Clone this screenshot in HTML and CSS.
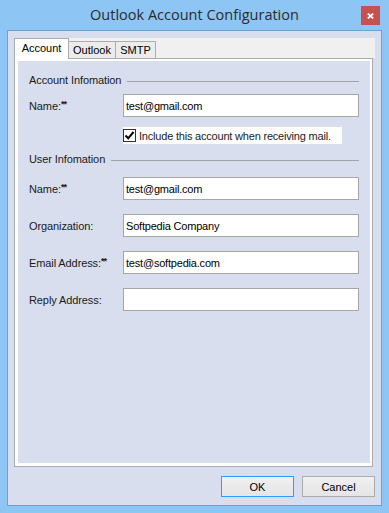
FILE: index.html
```html
<!DOCTYPE html>
<html>
<head>
<meta charset="utf-8">
<title>Outlook Account Configuration</title>
<link rel="stylesheet" href="styles.css">
</head>
<body>
<div class="window">
  <div class="titlebar">
    <span class="title">Outlook Account Configuration</span>
    <div class="close">
      <svg width="7" height="6" viewBox="0 0 7 6"><path d="M0.8 0.5 L6.2 5.5 M6.2 0.5 L0.8 5.5" stroke="#fff" stroke-width="1.8"/></svg>
    </div>
  </div>
  <div class="client">
    <div class="tabs">
      <div class="tabstrip">
        <div class="tab active t1">Account</div>
        <div class="tab t2">Outlook</div>
        <div class="tab t3">SMTP</div>
      </div>
      <div class="panel">
        <div class="page">
          <div class="group g1"><span>Account Infomation</span><span class="rule"></span></div>
          <div class="row r1">
            <label class="lbl">Name:<sup>**</sup></label>
            <input class="field" type="text" value="test@gmail.com" readonly>
          </div>
          <div class="check">
            <span class="box"><svg width="11" height="11" viewBox="0 0 11 11"><path d="M1.5 5.5 L4.2 8.3 L9.5 2" fill="none" stroke="#000" stroke-width="2"/></svg></span>
            <span>Include this account when receiving mail.</span>
          </div>
          <div class="group g2"><span>User Infomation</span><span class="rule"></span></div>
          <div class="rows">
            <div class="row">
              <label class="lbl">Name:<sup>**</sup></label>
              <input class="field" type="text" value="test@gmail.com" readonly>
            </div>
            <div class="row">
              <label class="lbl">Organization:</label>
              <input class="field" type="text" value="Softpedia Company" readonly>
            </div>
            <div class="row">
              <label class="lbl">Email Address:<sup>**</sup></label>
              <input class="field" type="text" value="test@softpedia.com" readonly>
            </div>
            <div class="row">
              <label class="lbl">Reply Address:</label>
              <input class="field" type="text" value="" readonly>
            </div>
          </div>
        </div>
      </div>
    </div>
    <div class="buttons">
      <button class="btn default">OK</button>
      <button class="btn">Cancel</button>
    </div>
  </div>
</div>
</body>
</html>
```
FILE: styles.css
```css
html, body {
  margin: 0;
  padding: 0;
  background: #8dc5f5;
  font-family: "Liberation Sans", Arial, sans-serif;
  font-size: 11px;
  color: #000;
}

.window {
  width: 389px;
  height: 513px;
  box-sizing: border-box;
  background: #8dc5f5;
  display: flex;
  flex-direction: column;
}

.titlebar {
  height: 30px;
  flex: none;
  display: grid;
  grid-template-columns: 1fr auto 1fr;
  align-items: start;
}

.title {
  grid-column: 2;
  font-family: "Open Sans", "Noto Sans", sans-serif;
  font-size: 14.5px;
  line-height: 30px;
  color: #2b2b2b;
  white-space: nowrap;
}

.close {
  grid-column: 3;
  justify-self: end;
  margin-top: 6px;
  margin-right: 9px;
  width: 19px;
  height: 19px;
  background: #c75050;
  display: flex;
  align-items: center;
  justify-content: center;
}

.client {
  flex: 1;
  margin: 0 7px 7px 7px;
  border: 1px solid #72a0cc;
  background: #d8deee;
  display: flex;
  flex-direction: column;
  padding: 7px 6px 0 6px;
}

.tabs {
  width: 361px;
  height: 429px;
  display: flex;
  flex-direction: column;
}

.tabstrip {
  height: 20px;
  flex: none;
  background: #f0f0f0;
  display: flex;
  align-items: flex-end;
}

.tab {
  box-sizing: border-box;
  height: 17px;
  border: 1px solid #acacac;
  border-bottom: none;
  background: #ececec;
  text-align: center;
  line-height: 13px;
  padding-top: 2px;
  margin-left: -1px;
}

.tab.active {
  height: 21px;
  margin-bottom: -1px;
  margin-left: 0;
  padding-top: 3px;
  background: #fff;
  position: relative;
  z-index: 1;
}

.t1 { width: 55px; }
.t2 { width: 48px; }
.t3 { width: 41px; }

.panel {
  flex: 1;
  width: 359px;
  box-sizing: border-box;
  border: 1px solid #acacac;
  background: #fff;
  padding: 2px 2px 3px 3px;
  display: flex;
}

.page {
  flex: 1;
  background: #d8deee;
  padding: 13px 11px 0 11px;
}

.group {
  display: flex;
  align-items: center;
  gap: 6px;
  height: 13px;
  line-height: 13px;
  color: #1a1a1a;
  letter-spacing: -0.1px;
}

.g2 {
  margin-top: 9px;
}

.rule {
  flex: 1;
  height: 0;
  border-top: 1px solid #a0a3aa;
  margin-top: 2px;
}

.row {
  display: grid;
  grid-template-columns: 94px 236px;
  align-items: center;
}

.r1 {
  margin-top: 7px;
}

.rows {
  margin-top: 11px;
  display: flex;
  flex-direction: column;
  gap: 14px;
}

.lbl {
  color: #1a1a1a;
  white-space: nowrap;
  letter-spacing: -0.1px;
}

.lbl sup {
  font-size: 9px;
  font-weight: bold;
  line-height: 0;
  vertical-align: 3px;
  letter-spacing: -1px;
  color: #2a1414;
}

.field {
  height: 23px;
  box-sizing: border-box;
  border: 1px solid #a6a6a6;
  background: #fff;
  padding: 0 2px;
  margin: 0;
  font-family: "Liberation Sans", Arial, sans-serif;
  font-size: 11px;
  letter-spacing: -0.2px;
  color: #000;
  outline: none;
  width: 236px;
}

.check {
  margin: 10px 0 0 94px;
  width: 219px;
  height: 17px;
  background: #fff;
  display: flex;
  align-items: center;
  gap: 3px;
  color: #1a1a1a;
  white-space: nowrap;
  letter-spacing: -0.2px;
}

.box {
  width: 13px;
  height: 13px;
  box-sizing: border-box;
  border: 1px solid #333;
  background: #fff;
  display: flex;
  align-items: center;
  justify-content: center;
}

.buttons {
  display: flex;
  justify-content: flex-end;
  gap: 8px;
  margin-top: 9px;
}

.btn {
  width: 73px;
  height: 21px;
  box-sizing: border-box;
  border: 1px solid #acacac;
  background: linear-gradient(#f0f0f0, #e5e5e5);
  font-family: "Liberation Sans", Arial, sans-serif;
  font-size: 11px;
  color: #000;
  padding: 0;
  margin: 0;
}

.btn.default {
  border-color: #3399ff;
}
```
